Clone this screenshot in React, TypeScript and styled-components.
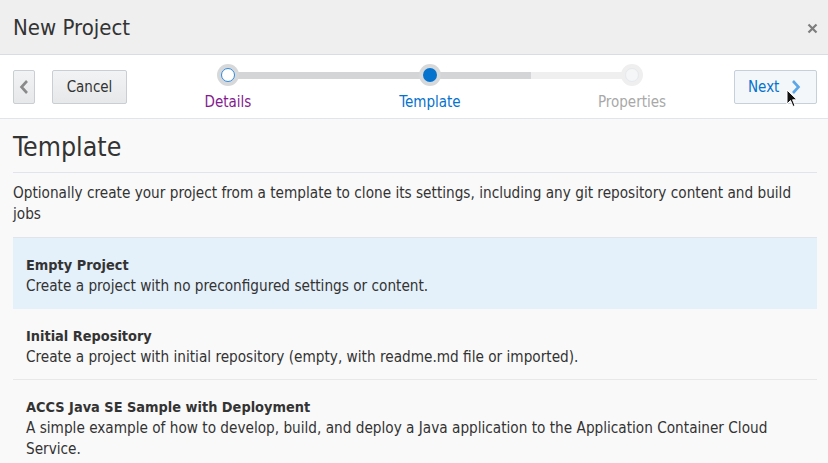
import React from "react";
import styled, { createGlobalStyle, css } from "styled-components";

const GlobalStyle = createGlobalStyle`
  html, body {
    margin: 0;
    padding: 0;
    background: #f9f9f9;
  }
  body {
    font-family: "DejaVu Sans", "Noto Sans", sans-serif;
    font-stretch: condensed;
    color: #333;
  }
`;

type StepState = "visited" | "current" | "disabled";

const steps: { label: string; state: StepState }[] = [
  { label: "Details", state: "visited" },
  { label: "Template", state: "current" },
  { label: "Properties", state: "disabled" },
];

const templates = [
  {
    title: "Empty Project",
    desc: "Create a project with no preconfigured settings or content.",
    selected: true,
  },
  {
    title: "Initial Repository",
    desc: "Create a project with initial repository (empty, with readme.md file or imported).",
  },
  {
    title: "ACCS Java SE Sample with Deployment",
    desc: "A simple example of how to develop, build, and deploy a Java application to the Application Container Cloud Service.",
  },
];

const Dialog = styled.div`
  width: 828px;
  height: 463px;
  overflow: hidden;
  display: flex;
  flex-direction: column;
  background: #f9f9f9;
`;

const Header = styled.div`
  height: 54px;
  flex: none;
  display: flex;
  align-items: center;
  justify-content: space-between;
  padding: 0 9px 0 13px;
  background: #efefef;
  border-bottom: 1px solid #d8dde3;
`;

const Title = styled.div`
  font-size: 22px;
  color: #333;
`;

const Close = styled.button`
  border: none;
  background: none;
  padding: 0;
  width: 14px;
  height: 14px;
  display: flex;
  align-items: center;
  justify-content: center;
  margin-top: 2px;
`;

const Toolbar = styled.div`
  height: 63px;
  flex: none;
  display: flex;
  align-items: center;
  padding: 0 11px 0 13px;
  background: #fff;
  border-bottom: 1px solid #e0e5ea;
`;

const Button = styled.button<{ $primary?: boolean }>`
  height: 34px;
  box-sizing: border-box;
  border: 1px solid #c9ced3;
  border-radius: 2px;
  background: linear-gradient(#f2f3f4, #e6e8ea);
  font-family: inherit;
  font-stretch: condensed;
  font-size: 15px;
  color: #333;
  display: flex;
  align-items: center;
  justify-content: center;
  padding: 0;
  position: relative;
  ${({ $primary }) =>
    $primary &&
    css`
      background: #f4f7fa;
      border-color: #c6d0da;
      color: #0572ce;
      justify-content: flex-start;
      padding-left: 13px;
      gap: 12px;
    `}
`;

const IconButton = styled(Button)`
  width: 22px;
`;

const CancelButton = styled(Button)`
  width: 75px;
  margin-left: 17px;
`;

const NextButton = styled(Button)`
  width: 83px;
  margin-left: 1px;
`;

const Train = styled.div`
  flex: 1;
  align-self: stretch;
  display: flex;
  position: relative;
  padding-top: 9px;
  box-sizing: border-box;

  &::before {
    content: "";
    position: absolute;
    top: 17px;
    left: 16.667%;
    right: 16.667%;
    height: 7px;
    background: linear-gradient(to right, #d4d5d7 75%, #efefef 75%);
  }
`;

const Step = styled.div`
  flex: 1;
  display: flex;
  flex-direction: column;
  align-items: center;
  gap: 7px;
  position: relative;
`;

const Dot = styled.div<{ $state: StepState }>`
  width: 22px;
  height: 22px;
  border-radius: 50%;
  background: ${({ $state }) => ($state === "disabled" ? "#efefef" : "#d7d8da")};
  display: flex;
  align-items: center;
  justify-content: center;

  &::after {
    content: "";
    width: 14px;
    height: 14px;
    box-sizing: border-box;
    border-radius: 50%;
    ${({ $state }) =>
      $state === "visited"
        ? css`
            background: #fff;
            border: 1.5px solid #2f8ae0;
          `
        : $state === "current"
        ? css`
            background: #0572ce;
          `
        : css`
            background: #f4f6f8;
            border: 1px solid #e6e9ec;
          `}
  }
`;

const StepLabel = styled.div<{ $state: StepState }>`
  font-size: 15px;
  line-height: 18px;
  color: ${({ $state }) =>
    $state === "visited" ? "#851a8f" : $state === "current" ? "#0572ce" : "#a8a8a8"};
`;

const Content = styled.div`
  padding: 0 11px 0 13px;
  flex: 1;
`;

const Heading = styled.h1`
  margin: 0;
  padding: 13px 0 10px;
  font-size: 26.5px;
  line-height: 30px;
  font-weight: normal;
  color: #333;
  border-bottom: 1px solid #dfe5eb;
`;

const Description = styled.p`
  margin: 0;
  padding: 10px 0 12px;
  font-size: 15.2px;
  line-height: 21px;
  color: #333;
  border-bottom: 1px solid #dfe5eb;
`;

const List = styled.ul`
  list-style: none;
  margin: 0;
  padding: 0;
`;

const Item = styled.li<{ $selected?: boolean }>`
  padding: 17px 13px 11px;
  border-bottom: 1px solid #e8e8e8;
  background: ${({ $selected }) => ($selected ? "#e4f0fa" : "transparent")};
  ${({ $selected }) => $selected && css`border-bottom-color: transparent;`}
`;

const ItemTitle = styled.div`
  font-size: 14.4px;
  line-height: 21px;
  font-weight: bold;
  color: #333;
`;

const ItemDesc = styled.div`
  font-size: 15.2px;
  line-height: 21px;
  color: #333;
`;

const Cursor = styled.svg`
  position: absolute;
  left: 51px;
  top: 18px;
`;

const Chevron = ({ dir, color }: { dir: "left" | "right"; color: string }) => (
  <svg width="10" height="16" viewBox="0 0 10 16">
    <path
      d={dir === "left" ? "M8 2 L2.5 8 L8 14" : "M2 2 L7.5 8 L2 14"}
      fill="none"
      stroke={color}
      strokeWidth="2.6"
    />
  </svg>
);

export default function App() {
  return (
    <>
      <GlobalStyle />
      <Dialog>
        <Header>
          <Title>New Project</Title>
          <Close aria-label="Close">
            <svg width="11" height="11" viewBox="0 0 11 11">
              <path d="M1.5 1.5 L9.5 9.5 M9.5 1.5 L1.5 9.5" stroke="#7d7d7d" strokeWidth="2.2" />
            </svg>
          </Close>
        </Header>
        <Toolbar>
          <IconButton aria-label="Back">
            <Chevron dir="left" color="#8a8a8a" />
          </IconButton>
          <CancelButton>Cancel</CancelButton>
          <Train>
            {steps.map((s) => (
              <Step key={s.label}>
                <Dot $state={s.state} />
                <StepLabel $state={s.state}>{s.label}</StepLabel>
              </Step>
            ))}
          </Train>
          <NextButton $primary>
            Next
            <Chevron dir="right" color="#5aa6e6" />
            <Cursor width="12" height="19" viewBox="0 0 12 19">
              <path d="M1 1 L1 15 L4.5 11.5 L7 17.5 L9 16.6 L6.6 10.8 L11 10.8 Z" fill="#111" stroke="#fff" strokeWidth="1" />
            </Cursor>
          </NextButton>
        </Toolbar>
        <Content>
          <Heading>Template</Heading>
          <Description>
            Optionally create your project from a template to clone its settings, including any git
            repository content and build jobs
          </Description>
          <List>
            {templates.map((t) => (
              <Item key={t.title} $selected={t.selected}>
                <ItemTitle>{t.title}</ItemTitle>
                <ItemDesc>{t.desc}</ItemDesc>
              </Item>
            ))}
          </List>
        </Content>
      </Dialog>
    </>
  );
}
